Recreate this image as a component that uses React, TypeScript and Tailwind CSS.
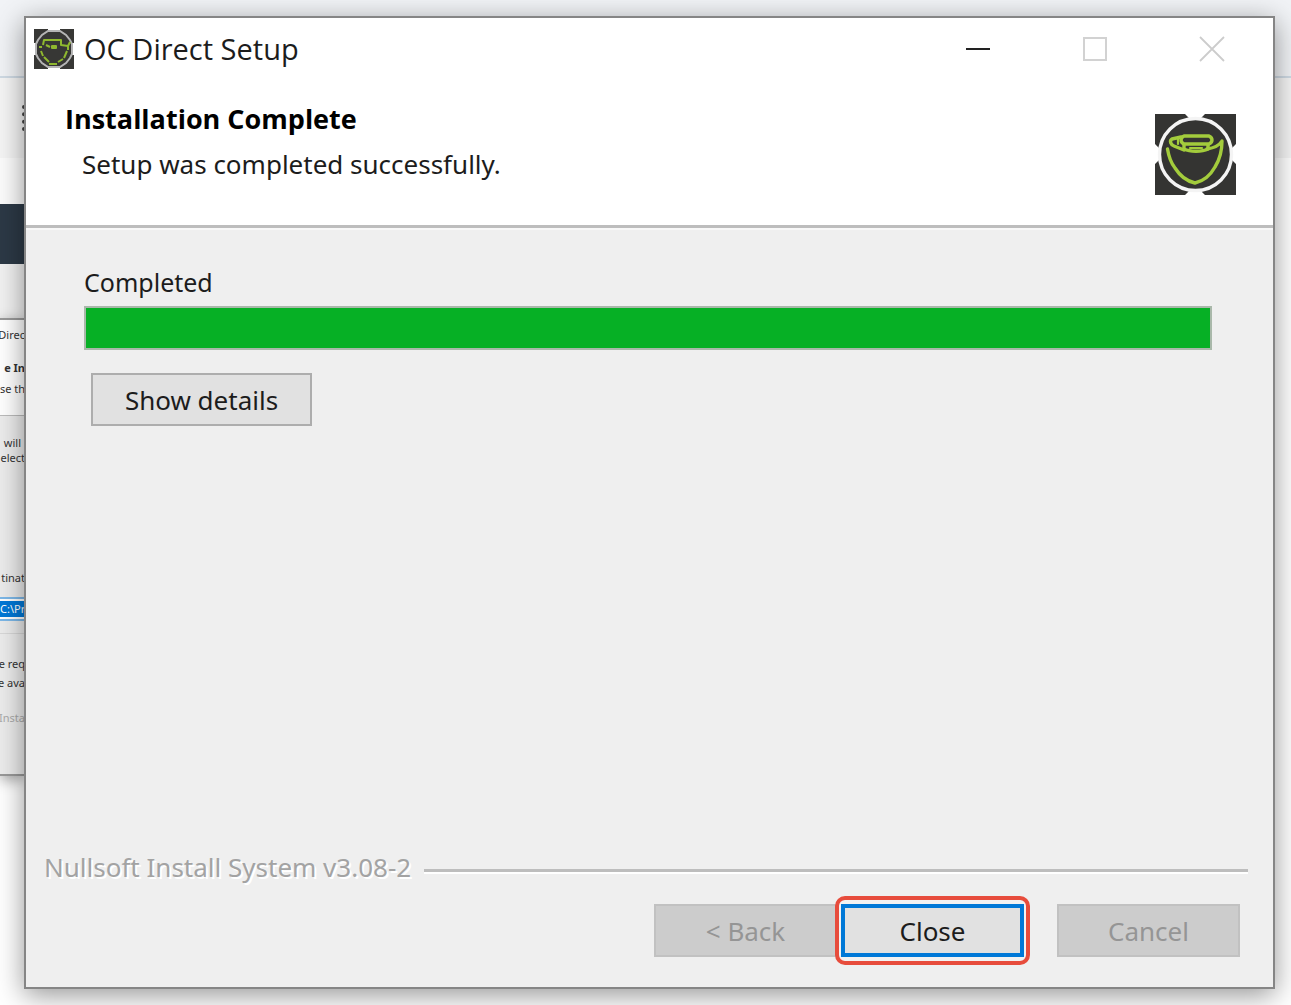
const dialogButton =
  'h-[53px] w-[183px] text-[26px] leading-none flex items-center justify-center';

function BowlMark({ className }: { className: string }) {
  return (
    <svg viewBox="0 0 81 81" className={className} fill="none" aria-hidden="true">
      <rect width="81" height="81" fill="#343432" />
      <path d="M30 0H50L45 5H35ZM35 76H45L50 81H30ZM0 30L5 35V45L0 50ZM81 30L76 35V45L81 50Z" fill="#fff" />
      <circle cx="40.5" cy="40.5" r="36" stroke="#f4f4f4" strokeWidth="3.4" />
      <g stroke="#a3cc3c" strokeWidth="3.4" strokeLinejoin="round" strokeLinecap="round">
        <path d="M12.5 35C14 44 16 49 20 54C25 62 31 67 40 69C49 67 55 62 60 53C65 45 67 37 67 27C64 32 59 34 52 35" />
        <path d="M29 22H54C58 24 58 28 54 30H29C25 28 25 24 29 22Z" />
        <path d="M26 23L17 25C14 27 16 31 19 32L29 36" />
        <path d="M29 31V35C35 38 47 38 53 35V31" />
        <path d="M35 34H47M23 25V30" strokeWidth="2.2" />
      </g>
    </svg>
  );
}

function BowlMarkSmall({ className }: { className: string }) {
  return (
    <svg viewBox="0 0 40 40" className={className} fill="none" aria-hidden="true">
      <rect width="40" height="40" fill="#373735" />
      <path d="M14 0H26V2H14ZM14 38H26V40H14ZM0 14H2V26H0ZM38 14H40V26H38Z" fill="#fff" />
      <path d="M14 2H26L32 6L36 11L38 15V25L36 29L32 34L26 38H14L8 34L4 29L2 25V15L4 11L8 6Z" stroke="#b5b5b5" strokeWidth="2" />
      <g stroke="#8fb82f" strokeWidth="2" strokeLinejoin="round">
        <path d="M9 16L10 11H27V16L34 17L36 13" />
        <path d="M5 18H8M7 22L9 27M10 28L15 33M15 35H23M24 33L29 30M30 29L33 22M34 21V17M12 16L16 18" />
        <path d="M18 19V17H22V19Z" />
      </g>
    </svg>
  );
}

function RearWindow() {
  return (
    <div className="h-[458px] border-y-2 border-[#999] bg-[#ececec] text-[11px] leading-[15px] text-[#333] shadow-[0_4px_14px_rgba(0,0,0,0.35)]">
      <div className="flex h-[96px] flex-col items-end border-b border-[#bbb] bg-white pt-[7px]">
        <p>Direc</p>
        <p className="mt-[18px] font-bold">e In</p>
        <p className="mt-[6px]">se th</p>
      </div>
      <div className="flex flex-col items-end pt-[19px]">
        <p className="pr-[4px]">will</p>
        <p>elect</p>
        <p className="mt-[105px]">tinat</p>
        <div className="mt-[12px] flex h-[24px] w-full justify-end border-y-2 border-[#7db8e8] bg-white py-[2px]">
          <p className="w-full bg-[#0078d7] text-right text-white">C:\Pr</p>
        </div>
        <div className="mt-[12px] h-px w-full bg-[#d8d8d8]" />
        <p className="mt-[22px]">e req</p>
        <p className="mt-[4px]">e ava</p>
        <p className="mt-[20px] text-[#aaa]">Insta</p>
      </div>
    </div>
  );
}

function Backdrop() {
  return (
    <div className="absolute inset-0 overflow-hidden bg-white">
      <div className="h-[76px] bg-[#f1f3f6]" />
      <div className="h-[2px] bg-[#cfdae4]" />
      <div className="h-[80px] bg-[#f5f5f5]">
        <div className="flex h-full w-[26px] items-center justify-end">
          <div className="h-[26px] border-l-4 border-dotted border-[#444]" />
        </div>
      </div>
      <div className="w-[25px] whitespace-nowrap">
        <div className="h-[46px] bg-[#fcfcfc]" />
        <div className="h-[60px] bg-[#2c3946]" />
        <div className="h-[54px] bg-[#f1f1f1]" />
        <RearWindow />
      </div>
    </div>
  );
}

function TitleBar() {
  return (
    <header className="flex h-[62px] items-center pr-[2px] pl-[8px]">
      <BowlMarkSmall className="h-10 w-10" />
      <h1 className="ml-[10px] flex-1 font-['Open_Sans'] text-[29px] leading-8">OC Direct Setup</h1>
      <button aria-label="Minimize" className="flex h-full w-[118px] items-center justify-center">
        <span className="h-[2px] w-6 bg-[#222]" />
      </button>
      <button aria-label="Maximize" disabled className="flex h-full w-[116px] items-center justify-center">
        <span className="h-6 w-6 border-2 border-[#d2d2d2]" />
      </button>
      <button aria-label="Close window" disabled className="flex h-full w-[118px] items-center justify-center">
        <svg viewBox="0 0 26 26" className="h-[26px] w-[26px]" stroke="#ccc" strokeWidth="1.8">
          <path d="M1 1L25 25M25 1L1 25" />
        </svg>
      </button>
    </header>
  );
}

export default function App() {
  return (
    <div className="relative flex min-h-screen flex-col pt-4 pr-4 pb-4 pl-6 font-['Noto_Sans','Open_Sans',sans-serif] text-[#1c1c1c]">
      <Backdrop />

      <main className="relative flex flex-1 flex-col border-2 border-[#858585] bg-[#efefef] shadow-[0_6px_26px_rgba(0,0,0,0.42)]">
        <div className="border-b-[3px] border-[#bdbdbd] bg-white">
          <TitleBar />
          <div className="flex h-[145px] items-start justify-between pr-[37px] pl-[39px]">
            <div className="pt-[21px]">
              <h2 className="font-['Open_Sans'] text-[27px] leading-9 font-bold text-black">Installation Complete</h2>
              <p className="mt-[9px] ml-[17px] text-[26px] leading-9">Setup was completed successfully.</p>
            </div>
            <BowlMark className="mt-[34px] h-[81px] w-[81px]" />
          </div>
        </div>

        <section className="flex-1 border-t-2 border-[#f8f8f8] pr-[61px] pl-[58px] pt-[34px]">
          <p id="install-status" className="text-[25px] leading-9">Completed</p>
          <div
            role="progressbar"
            aria-labelledby="install-status"
            aria-valuenow={100}
            className="mt-[6px] h-[44px] border-2 border-[#a9b8aa] bg-[#06b025]"
          />
          <button className="mt-[23px] ml-[7px] flex h-[53px] w-[221px] items-center justify-center border-2 border-[#adadad] bg-[#e1e1e1] text-[26px] leading-none">
            Show details
          </button>
        </section>

        <footer className="pr-[25px] pb-[22px] pl-[18px] text-[#a3a3a3]">
          <div className="flex items-center gap-[13px]">
            <p className="text-[26px] leading-9 [text-shadow:2px_2px_0_#fff]">Nullsoft Install System v3.08-2</p>
            <div className="mt-[8px] h-[5px] flex-1 border-t-[3px] border-b-2 border-t-[#bdbdbd] border-b-white" />
          </div>
          <div className="mt-[11px] flex items-center justify-end pr-[8px]">
            <button disabled className={`${dialogButton} border-2 border-[#c1c1c1] bg-[#cccccc] text-[#959595]`}>
              &lt; Back
            </button>
            <div className="mr-[27px] -ml-[2px] rounded-[10px] border-4 border-[#e74c3c] bg-[#f2f2f2] px-[2px] py-[4px]">
              <button className={`${dialogButton} border-4 border-[#0078d7] bg-[#e1e1e1] text-[#1c1c1c]`}>Close</button>
            </div>
            <button disabled className={`${dialogButton} border-2 border-[#c1c1c1] bg-[#cccccc] text-[#959595]`}>
              Cancel
            </button>
          </div>
        </footer>
      </main>
    </div>
  );
}
